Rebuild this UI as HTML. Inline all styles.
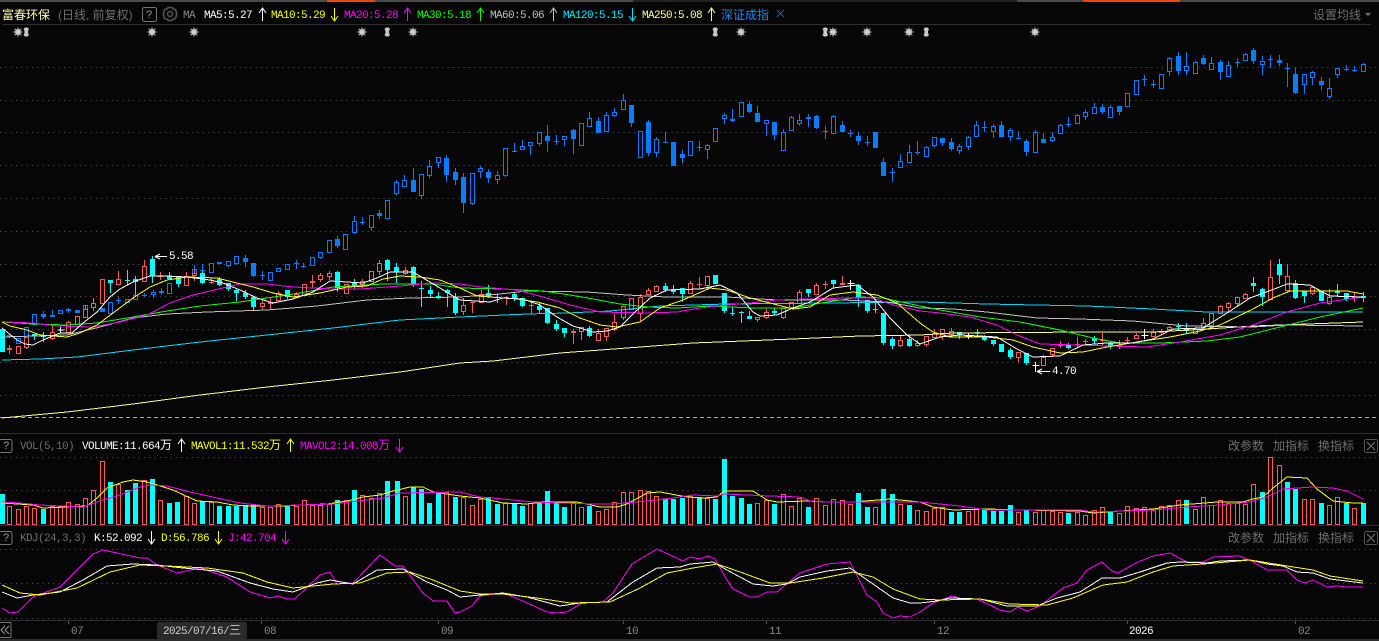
<!DOCTYPE html>
<html lang="zh"><head><meta charset="utf-8"><title>富春环保</title>
<style>
html,body{margin:0;padding:0;background:#060606;overflow:hidden;width:1379px;height:641px}
svg{display:block}
.m{font-family:"Liberation Mono","Noto Sans CJK SC",monospace;font-size:11px;letter-spacing:-.6px}
.c{font-family:"Liberation Sans","Noto Sans CJK SC",sans-serif;font-size:12px}
.w{fill:none;stroke-width:1}
.f{fill:none;stroke-width:5}
.h{fill:#060606;stroke-width:1}
.v{fill:none;stroke-width:1}
polyline{fill:none;stroke-width:1;shape-rendering:crispEdges}
</style></head><body>
<svg xmlns="http://www.w3.org/2000/svg" width="1379" height="641" viewBox="0 0 1379 641">
<defs>
<g id="au" fill="none" stroke="currentColor"><path d="M.5 0V13M-3 5L.5 0L4 5"/></g>
<g id="ad" fill="none" stroke="currentColor"><path d="M.5 0V13M-3 8L.5 13L4 8"/></g>
<g id="s" stroke="#cccccc"><circle r="3" fill="#cccccc" stroke="none"/><path d="M0 -4.5V4.5M-4.5 0H4.5M-3.3 -3.3L3.3 3.3M-3.3 3.3L3.3 -3.3"/></g>
<g id="t" fill="#c8c8c8"><path d="M-1 -4.5H1.500L3 -3L2 -1V1L3 3L1.500 4.500H-1L-2.500 3L-1.500 1V-1L-2.500 -3Z"/></g>
</defs>
<rect width="1379" height="641" fill="#060606"/>
<!-- top strip -->
<rect x="0" y="0" width="633" height="2" fill="#4a4a4a"/><rect x="633" y="0" width="384" height="2" fill="#222"/><rect x="1017" y="0" width="362" height="2" fill="#4a4a4a"/>
<rect x="327" y="0" width="48" height="2" fill="#e8480c"/><rect x="1083" y="0" width="97" height="2" fill="#e8480c"/>
<rect x="2" y="24" width="1369" height="1" fill="#2e2e2e"/>
<rect x="0" y="433" width="1379" height="1" fill="#2e2e2e"/><rect x="0" y="525" width="1379" height="1" fill="#2e2e2e"/><rect x="0" y="620" width="1379" height="1" fill="#2e2e2e"/><rect x="0" y="639" width="1379" height="2" fill="#2e2e2e"/>
<!-- grid -->
<path fill="none" stroke="#5a5a5a" stroke-dasharray="1 4.33" d="M0 67.500H1379M0 100.500H1379M0 132.500H1379M0 165.500H1379M0 198.500H1379M0 231.500H1379M0 264.500H1379M0 296.500H1379M0 329.500H1379M0 362.500H1379M0 395.500H1379M0 457.500H1379M0 490.500H1379M0 549.500H1379M0 583.500H1379M0 618.500H1379"/>
<path fill="none" stroke="#aaa" stroke-dasharray="4 3" d="M0 417.500H1379"/>

<!-- blue overlay candles -->
<g stroke="#0a7cff" transform="translate(.5,0)">
<path class="w" d="M9 335V338M43 311V319M52 310V317M68 308V313M118 297V304M144 293V297M153 290V298M161 288V295M194 265V276M202 264V274M228 261V267M236 256V265M245 255V267M253 263V277M262 271V280M296 260V269M303 263V268M320 252V259M337 236V248M354 216V234M362 217V225M371 215V231M379 210V219M396 180V195M404 175V187M413 168V192M421 174V198M429 160V178M438 157V168M446 155V182M455 168V185M463 173V213M472 173V205M480 166V178M488 169V183M497 171V184M505 148V177M514 143V152M522 140V150M530 142V155M539 132V146M547 125V152M556 135V145M564 136V146M573 129V154M581 123V146M589 112V127M598 117V133M606 112V131M614 108V117M623 94V110M631 105V127M640 131V158M648 120V156M656 137V157M665 132V143M673 142V166M682 150V163M690 141V155M699 141V151M707 144V159M724 113V124M732 109V122M749 101V113M757 106V122M766 120V136M774 122V140M783 129V150M791 116V130M799 114V126M808 114V127M816 115V129M825 126V139M833 115V133M842 121V132M850 130V137M858 132V145M867 136V146M875 132V148M883 158V176M892 168V182M900 154V167M909 145V162M917 141V155M926 146V157M934 137V147M942 138V146M951 138V151M959 144V154M968 136V150M976 121V136M984 121V132M993 124V138M1001 121V137M1010 128V141M1018 131V139M1026 139V156M1035 130V152M1043 133V143M1052 132V142M1060 124V133M1068 117V127M1077 114V124M1085 110V120M1094 103V113M1102 104V114M1110 105V117M1119 106V115M1144 75V86M1153 80V88M1169 57V76M1178 52V75M1186 52V75M1195 61V73M1203 55V65M1211 57V69M1220 60V80M1228 61V76M1237 58V67M1245 53V61M1253 48V64M1262 56V75M1270 55V68M1279 55V66M1287 63V87M1295 68V94M1304 74V94M1312 71V85M1321 77V90M1329 78V99M1337 68V78M1346 65V71M1354 66V72M1363 63V71"/>
<path class="f" d="M9 335V337M43 314V317M52 315V317M68 309V311M77 310V313M102 308V312M118 300V301M144 295V296M161 291V293M202 270V271M219 262V264M245 258V262M253 263V276M262 275V276M296 263V264M303 266V267M337 239V246M362 222V223M379 213V216M413 180V192M446 158V175M455 172V180M463 177V203M488 172V178M514 151V152M547 136V141M556 141V142M573 130V139M598 121V133M631 105V123M648 122V153M665 142V143M673 142V166M682 154V158M699 147V148M732 119V121M749 104V112M757 113V122M774 122V135M808 117V119M816 116V128M825 131V132M842 125V132M850 133V134M858 136V141M867 142V143M875 132V148M883 162V176M892 172V173M917 152V153M942 138V143M951 142V149M984 127V128M1001 125V137M1018 138V139M1026 141V152M1043 139V143M1068 124V125M1102 107V112M1119 106V112M1144 79V80M1153 84V85M1178 56V71M1203 58V64M1220 62V72M1237 62V63M1253 50V61M1270 59V60M1279 60V63M1287 68V69M1295 74V93M1321 81V85M1346 69V70M1354 70V71"/>
</g>
<path class="h" stroke="#0a7cff" transform="translate(.5,.5)" d="M16 338h4V343h-4zM24 327h4V337h-4zM32 314h4V324h-4zM58 310h4V313h-4zM83 305h4V317h-4zM108 302h4V313h-4zM125 299h4V302h-4zM133 295h4V299h-4zM151 292h4V294h-4zM167 283h4V293h-4zM192 269h4V275h-4zM209 263h4V272h-4zM226 261h4V265h-4zM234 256h4V263h-4zM268 272h4V280h-4zM276 268h4V271h-4zM285 264h4V269h-4zM310 257h4V265h-4zM318 252h4V257h-4zM327 240h4V252h-4zM343 234h4V249h-4zM352 221h4V232h-4zM369 215h4V227h-4zM385 200h4V218h-4zM394 182h4V193h-4zM402 180h4V186h-4zM419 174h4V195h-4zM427 166h4V175h-4zM436 157h4V162h-4zM470 173h4V203h-4zM478 168h4V171h-4zM495 175h4V179h-4zM503 148h4V175h-4zM520 146h4V149h-4zM528 142h4V145h-4zM537 132h4V143h-4zM562 136h4V139h-4zM579 123h4V145h-4zM587 118h4V126h-4zM604 115h4V131h-4zM612 112h4V115h-4zM621 100h4V109h-4zM638 131h4V157h-4zM654 139h4V152h-4zM688 141h4V155h-4zM705 145h4V149h-4zM713 128h4V141h-4zM722 115h4V118h-4zM739 102h4V116h-4zM764 120h4V123h-4zM781 132h4V150h-4zM789 117h4V130h-4zM797 120h4V123h-4zM831 116h4V133h-4zM898 161h4V167h-4zM907 152h4V162h-4zM924 147h4V156h-4zM932 137h4V145h-4zM957 146h4V150h-4zM966 137h4V146h-4zM974 125h4V136h-4zM991 126h4V131h-4zM1008 130h4V136h-4zM1033 132h4V152h-4zM1050 137h4V140h-4zM1058 125h4V133h-4zM1075 115h4V123h-4zM1083 112h4V116h-4zM1092 107h4V113h-4zM1108 107h4V117h-4zM1125 93h4V106h-4zM1134 80h4V94h-4zM1159 74h4V88h-4zM1167 58h4V71h-4zM1184 66h4V70h-4zM1193 62h4V73h-4zM1209 63h4V69h-4zM1226 65h4V76h-4zM1243 54h4V60h-4zM1260 61h4V64h-4zM1302 74h4V84h-4zM1310 72h4V77h-4zM1327 88h4V96h-4zM1335 68h4V74h-4zM1361 64h4V71h-4z"/>

<!-- main candles -->
<g transform="translate(.5,0)">
<g stroke="#00ffff">
<path class="w" d="M34 334V340M43 332V342M110 280V293M127 270V285M135 276V295M152 256V283M169 272V280M178 277V287M202 271V284M219 277V286M228 283V291M236 288V301M245 290V299M253 297V310M287 290V299M337 271V292M354 279V289M387 259V281M396 263V283M413 266V287M421 281V307M430 286V297M438 292V299M447 289V307M455 293V315M488 285V298M497 294V303M514 293V301M522 298V307M539 303V313M547 308V324M556 320V331M564 328V337M589 326V337M665 283V292M673 285V294M682 288V302M724 293V313M732 307V316M741 311V323M749 311V319M774 308V315M808 289V297M833 280V288M858 284V307M867 300V313M875 303V313M883 313V345M892 337V349M909 335V347M959 332V339M977 329V336M984 335V341M993 340V346M1010 348V359M1026 353V365M1068 343V349M1094 336V344M1110 341V349M1178 323V330M1186 323V333M1253 277V292M1262 288V306M1279 259V284M1295 280V299M1304 291V303M1337 284V297M1346 293V301M1363 292V302"/>
<path class="f" d="M2 329V352M34 334V336M43 336V337M110 280V283M127 280V281M135 279V282M152 259V276M169 276V279M178 277V284M202 273V283M219 279V285M228 283V289M236 290V293M245 293V297M253 297V307M287 290V297M337 272V288M354 282V287M387 260V270M396 267V272M413 267V285M421 288V289M430 290V294M438 296V297M447 290V293M455 297V313M488 293V297M497 297V298M514 294V299M522 298V306M539 306V310M547 308V323M556 324V329M564 328V333M589 328V336M665 286V290M673 289V292M682 288V294M715 275V284M724 293V311M732 313V314M741 312V313M749 316V319M774 311V313M808 289V293M833 280V284M858 285V297M867 300V311M875 309V310M883 313V343M892 339V346M909 339V346M959 332V335M977 332V333M984 336V340M993 340V344M1001 344V352M1010 350V357M1026 353V363M1068 345V348M1094 338V341M1110 343V346M1178 326V327M1186 328V331M1253 283V286M1262 289V297M1279 264V275M1295 283V298M1304 291V296M1321 291V301M1337 291V293M1346 293V299M1363 296V298"/>
</g>
<g stroke="#fc5c57">
<path class="w" d="M9 345V354M26 337V349M52 326V340M68 321V332M85 305V317M93 298V311M118 271V285M144 260V281M160 272V280M186 272V285M194 270V281M211 278V284M262 299V309M270 298V309M278 291V300M296 292V297M312 275V288M320 273V282M329 271V280M362 279V288M379 260V275M405 267V275M463 298V315M472 302V313M481 290V302M506 296V305M531 302V314M573 329V344M581 327V340M598 329V340M606 328V341M614 314V331M623 306V320M640 294V322M648 288V294M656 285V291M690 281V293M699 277V289M707 276V290M757 317V322M766 309V319M783 308V319M791 302V308M799 290V303M816 283V294M825 281V289M842 276V285M900 335V347M917 340V347M926 336V347M934 329V337M942 329V340M951 328V336M1018 352V362M1043 355V365M1052 348V357M1060 341V348M1077 337V347M1085 339V345M1102 333V345M1119 340V349M1127 337V343M1136 333V339M1153 329V337M1161 329V335M1169 326V331M1195 327V334M1203 318V328M1220 305V313M1228 302V312M1237 297V307M1245 293V298M1270 260V299M1287 264V293M1312 286V295M1329 289V305M1354 293V302"/>
<path class="f" d="M9 348V350M160 276V277M211 282V283M270 302V304M312 281V283M472 302V303M506 297V298M531 305V306M573 331V333M699 284V285M825 284V285M842 283V285M1060 345V346M1077 344V345M1085 341V342M1102 340V341M1119 345V346M1127 340V341M1161 332V333M1354 297V298"/>
</g>
<path stroke="#fff" class="w" d="M60 327V333M57 330H64M850 280V290M847 283.500H854M968 333V339M965 336.500H972M1035 362V372M1032 365.500H1039M1144 329V339M1141 335.500H1148"/>
</g>
<path class="h" stroke="#fc5c57" transform="translate(.5,.5)" d="M16 346h4V353h-4zM24 337h4V347h-4zM50 332h4V338h-4zM66 322h4V332h-4zM75 316h4V324h-4zM83 309h4V317h-4zM91 303h4V307h-4zM100 279h4V303h-4zM116 279h4V284h-4zM142 266h4V281h-4zM184 276h4V285h-4zM192 273h4V275h-4zM260 303h4V306h-4zM276 293h4V300h-4zM294 294h4V297h-4zM302 284h4V295h-4zM318 275h4V279h-4zM327 273h4V276h-4zM344 284h4V293h-4zM360 281h4V284h-4zM369 271h4V281h-4zM377 263h4V271h-4zM403 270h4V273h-4zM461 305h4V311h-4zM479 294h4V302h-4zM579 327h4V331h-4zM596 333h4V340h-4zM604 328h4V336h-4zM612 322h4V329h-4zM621 306h4V317h-4zM629 298h4V309h-4zM638 297h4V313h-4zM646 290h4V294h-4zM654 286h4V291h-4zM688 283h4V293h-4zM705 276h4V285h-4zM755 317h4V319h-4zM764 312h4V317h-4zM781 308h4V317h-4zM789 302h4V307h-4zM797 292h4V303h-4zM814 285h4V294h-4zM898 340h4V345h-4zM915 343h4V345h-4zM924 336h4V344h-4zM932 333h4V337h-4zM940 329h4V336h-4zM949 331h4V334h-4zM1016 352h4V357h-4zM1041 357h4V365h-4zM1050 348h4V354h-4zM1134 335h4V338h-4zM1151 332h4V336h-4zM1167 327h4V329h-4zM1193 329h4V333h-4zM1201 323h4V327h-4zM1209 313h4V325h-4zM1218 306h4V313h-4zM1226 303h4V307h-4zM1235 297h4V303h-4zM1243 294h4V298h-4zM1268 277h4V299h-4zM1285 276h4V290h-4zM1310 287h4V293h-4zM1327 297h4V303h-4z"/>

<!-- MA lines -->
<polyline stroke="#00d8f8" points="2,360 40,359 77,357 133,350 200,342 267,335 333,328 400,320 460,317 527,314 567,313 610,311 660,306 727,304 827,303 920,302 987,304 1087,306 1153,309 1207,312 1287,312 1363,312"/>
<polyline stroke="#ffff99" points="2,418 67,412 133,404 200,395 267,387 333,380 400,372 460,363 493,361 560,353 627,348 693,343 793,339 860,336 920,335 953,333 1087,332 1153,332 1207,329 1253,326 1363,322"/>
<polyline stroke="#c0c0c0" points="2,337 67,335 100,327 133,318 167,314 207,312 267,310 317,306 367,300 410,298 460,297 500,294 527,291 587,292 627,295 667,297 727,297 777,300 843,300 887,302 920,308 953,309 987,312 1037,318 1080,319 1133,321 1187,326 1253,327 1287,325 1363,326"/>
<polyline stroke="#00ff00" points="2,322 33,324 67,325 97,323 133,317 167,311 200,306 240,302 267,298 300,293 333,287 383,284 433,284 460,288 503,289 543,291 570,295 593,299 620,304 647,307 677,308 710,306 753,308 793,308 827,302 860,297 883,298 920,306 940,310 980,317 1020,322 1060,330 1093,338 1120,343 1160,343 1207,341 1240,337 1280,327 1320,317 1363,308"/>
<polyline stroke="#ff00ff" points="5,322 33,323 57,326 93,327 120,322 147,315 170,303 193,295 227,287 240,284 267,284 293,287 333,289 360,289 400,286 433,283 460,284 480,287 517,290 543,297 570,305 600,312 647,313 677,312 700,308 727,305 750,303 777,300 807,299 847,298 873,298 893,305 920,311 940,313 970,317 997,325 1017,335 1040,344 1080,345 1107,346 1147,347 1180,342 1220,335 1253,325 1287,312 1320,303 1363,297"/>
<polyline stroke="#ffff00" points="2,322 10,326 27,330 40,335 67,337 80,333 97,325 113,313 133,298 150,287 167,280 187,277 217,278 233,282 253,287 273,293 293,297 320,293 347,287 367,286 383,279 400,276 420,277 440,280 460,288 477,296 517,299 537,302 560,308 580,318 600,325 617,327 640,322 660,308 683,300 710,288 727,290 750,298 770,303 793,309 810,307 830,295 853,292 877,295 897,303 920,323 933,332 950,337 987,337 1013,340 1033,347 1060,353 1083,352 1107,347 1137,342 1170,337 1200,331 1220,325 1253,309 1273,298 1290,291 1347,291 1363,294"/>
<polyline stroke="#ffffff" points="2,328 17,340 25,344 33,345 43,340 60,333 72,333 83,323 97,312 110,297 120,289 133,282 150,276 167,276 187,277 210,280 223,283 240,290 257,298 273,303 293,299 313,292 330,281 347,282 363,283 377,278 390,272 413,272 423,278 440,288 453,296 460,300 490,302 503,298 523,299 540,305 557,317 573,326 593,332 607,331 620,327 633,314 650,298 667,290 700,289 720,285 737,293 753,312 760,316 777,315 793,308 810,302 833,288 857,285 873,297 890,318 907,335 920,344 940,337 960,335 997,337 1017,349 1033,357 1060,356 1083,345 1107,343 1133,343 1153,339 1173,329 1203,328 1227,313 1250,298 1277,288 1287,284 1310,285 1330,296 1363,297"/>

<!-- extreme labels -->
<path fill="none" stroke="#fff" d="M155 256.500H167M155 256.500L160 254M155 256.500L160 259M1037 371.500H1050M1037 371.500L1042 369M1037 371.500L1042 374"/>
<text class="m" x="169" y="259" fill="#fff">5.58</text>
<text class="m" x="1052" y="374" fill="#fff">4.70</text>

<!-- markers -->
<use href="#s" x="18" y="32"/><use href="#t" x="26" y="32"/><use href="#s" x="152" y="32"/><use href="#s" x="194" y="32"/><use href="#s" x="362" y="32"/><use href="#t" x="387" y="32"/><use href="#s" x="413" y="32"/><use href="#t" x="715" y="32"/><use href="#s" x="741" y="32"/><use href="#t" x="825" y="32"/><use href="#s" x="833" y="32"/><use href="#s" x="867" y="32"/><use href="#s" x="909" y="32"/><use href="#t" x="926" y="32"/><use href="#s" x="1035" y="32"/>

<!-- header -->
<text class="c" x="2" y="19" fill="#ffffb0">富春环保</text>
<text class="c" x="58" y="19" fill="#6e6e6e">(日线, 前复权)</text>
<rect x="142.500" y="7.500" width="14" height="14" rx="2" fill="none" stroke="#777"/>
<text class="m" x="146" y="18" fill="#999">?</text>
<path fill="none" stroke="#555" stroke-width="1.500" d="M168 7.500H172L173 9L175.500 9.500L176.500 13V15L175.500 18.500L173 19L172 20.500H168L167 19L164.500 18.500L163.500 15V13L164.500 9.500L167 9Z"/><circle cx="170" cy="14" r="2.500" fill="none" stroke="#555" stroke-width="1.500"/>
<text class="m" x="183" y="18" fill="#888">MA</text>
<text class="m" x="204" y="18" fill="#fff">MA5:5.27</text><use href="#au" x="262" y="8" color="#fff"/>
<text class="m" x="271" y="18" fill="#ffff00">MA10:5.29</text><use href="#ad" x="334" y="8" color="#ffff00"/>
<text class="m" x="344" y="18" fill="#ff00ff">MA20:5.28</text><use href="#au" x="407" y="8" color="#ff00ff"/>
<text class="m" x="417" y="18" fill="#00ff00">MA30:5.18</text><use href="#au" x="480" y="8" color="#00ff00"/>
<text class="m" x="490" y="18" fill="#c0c0c0">MA60:5.06</text><use href="#au" x="553" y="8" color="#c0c0c0"/>
<text class="m" x="563" y="18" fill="#00e5ff">MA120:5.15</text><use href="#ad" x="632" y="8" color="#00e5ff"/>
<text class="m" x="642" y="18" fill="#ffff99">MA250:5.08</text><use href="#au" x="711" y="8" color="#ffff99"/>
<text class="c" x="721" y="19" fill="#1a86f0">深证成指</text>
<path fill="none" stroke="#1a66b0" d="M777 10L784 17M784 10L777 17"/>
<text class="c" x="1313" y="19" fill="#6e6e6e">设置均线</text>
<path fill="#777" d="M1365 13H1371L1368 16Z"/>

<!-- volume bars -->
<path class="f" stroke="#00ffff" transform="translate(.5,0)" d="M2 494V524M43 509V524M110 482V524M127 490V524M135 483V524M152 479V524M169 503V524M177 502V524M202 501V524M219 506V524M228 506V524M236 506V524M245 505V524M253 504V524M287 506V524M337 500V524M354 490V524M387 481V524M397 481V524M413 487V524M421 489V524M429 503V524M438 493V524M455 497V524M488 497V524M497 504V524M514 504V524M522 506V524M539 503V524M547 491V524M556 502V524M564 507V524M589 506V524M665 499V524M673 499V524M682 498V524M699 497V524M715 499V524M724 459V524M732 496V524M741 498V524M749 504V524M774 504V524M808 507V524M858 493V524M867 507V524M883 489V524M892 494V524M909 505V524M951 512V524M959 512V524M984 510V524M993 511V524M1001 511V524M1010 505V524M1026 510V524M1068 513V524M1110 512V524M1186 500V524M1262 492V524M1287 482V524M1295 489V524M1321 503V524M1346 503V524M1363 503V524"/>
<path class="v" stroke="#fc5c57" transform="translate(.5,.5)" d="M7 506h4V524h-4zM16 509h4V524h-4zM24 506h4V524h-4zM32 508h4V524h-4zM50 506h4V524h-4zM58 507h4V524h-4zM66 502h4V524h-4zM75 504h4V524h-4zM83 498h4V524h-4zM91 490h4V524h-4zM100 461h4V524h-4zM116 484h4V524h-4zM142 480h4V524h-4zM158 500h4V524h-4zM184 496h4V524h-4zM192 503h4V524h-4zM209 502h4V524h-4zM260 507h4V524h-4zM268 507h4V524h-4zM276 504h4V524h-4zM294 506h4V524h-4zM302 500h4V524h-4zM310 505h4V524h-4zM318 505h4V524h-4zM327 504h4V524h-4zM344 500h4V524h-4zM360 495h4V524h-4zM369 498h4V524h-4zM377 493h4V524h-4zM403 496h4V524h-4zM444 492h4V524h-4zM461 497h4V524h-4zM470 505h4V524h-4zM478 499h4V524h-4zM503 503h4V524h-4zM528 503h4V524h-4zM571 502h4V524h-4zM579 507h4V524h-4zM596 511h4V524h-4zM604 509h4V524h-4zM612 502h4V524h-4zM621 492h4V524h-4zM629 492h4V524h-4zM638 490h4V524h-4zM646 491h4V524h-4zM654 496h4V524h-4zM688 496h4V524h-4zM705 498h4V524h-4zM755 503h4V524h-4zM764 500h4V524h-4zM781 494h4V524h-4zM789 506h4V524h-4zM797 498h4V524h-4zM814 498h4V524h-4zM823 505h4V524h-4zM831 499h4V524h-4zM840 500h4V524h-4zM848 504h4V524h-4zM873 507h4V524h-4zM898 504h4V524h-4zM915 510h4V524h-4zM924 511h4V524h-4zM932 508h4V524h-4zM940 507h4V524h-4zM966 511h4V524h-4zM974 508h4V524h-4zM1016 512h4V524h-4zM1033 512h4V524h-4zM1041 510h4V524h-4zM1050 511h4V524h-4zM1058 512h4V524h-4zM1075 512h4V524h-4zM1083 515h4V524h-4zM1092 510h4V524h-4zM1100 507h4V524h-4zM1117 513h4V524h-4zM1125 506h4V524h-4zM1134 508h4V524h-4zM1142 507h4V524h-4zM1151 510h4V524h-4zM1159 506h4V524h-4zM1167 505h4V524h-4zM1176 500h4V524h-4zM1193 509h4V524h-4zM1201 497h4V524h-4zM1209 505h4V524h-4zM1218 500h4V524h-4zM1226 503h4V524h-4zM1235 503h4V524h-4zM1243 504h4V524h-4zM1251 484h4V524h-4zM1268 457h4V524h-4zM1277 465h4V524h-4zM1302 499h4V524h-4zM1310 499h4V524h-4zM1327 505h4V524h-4zM1335 497h4V524h-4zM1352 508h4V524h-4z"/>
<polyline stroke="#ffff00" points="2,503 33,505 43,508 63,507 87,506 97,498 107,488 123,482 133,480 147,482 157,485 173,490 197,501 217,502 233,505 250,506 283,506 300,505 327,504 347,501 363,497 380,495 393,491 410,487 423,487 433,492 460,496 480,498 503,503 527,504 543,502 577,502 600,507 617,507 627,504 647,493 660,492 687,497 703,498 717,497 724,491 753,491 767,500 777,502 807,501 827,502 853,502 890,499 920,502 933,507 953,510 987,509 1020,510 1080,511 1093,513 1120,511 1153,509 1180,505 1217,502 1243,502 1253,499 1263,497 1273,488 1287,477 1307,478 1317,489 1333,501 1353,503 1363,503"/>
<polyline stroke="#ff00ff" points="2,502 20,503 40,505 83,507 100,501 117,496 140,487 150,485 167,486 190,492 217,498 240,503 267,506 333,504 383,498 400,493 460,492 480,497 503,499 533,502 593,504 613,504 647,501 673,498 693,495 717,496 724,494 770,496 800,497 810,501 827,502 880,502 920,502 940,504 960,506 987,510 1080,510 1093,512 1153,510 1187,507 1220,505 1250,502 1267,497 1283,489 1313,487 1333,488 1347,491 1363,499"/>

<!-- volume header -->
<rect x="-1" y="439.500" width="13" height="13" rx="2" fill="none" stroke="#777"/><text class="m" x="3" y="449" fill="#999">?</text>
<text class="m" x="20" y="449" fill="#6e6e6e">VOL(5,10)</text>
<text class="m" x="82" y="449" fill="#fff">VOLUME:11.664<tspan class="c">万</tspan></text><use href="#au" x="181" y="439" color="#fff"/>
<text class="m" x="191" y="449" fill="#ffff00">MAVOL1:11.532<tspan class="c">万</tspan></text><use href="#au" x="290" y="439" color="#ffff00"/>
<text class="m" x="300" y="449" fill="#ff00ff">MAVOL2:14.008<tspan class="c">万</tspan></text><use href="#ad" x="399" y="439" color="#ff00ff"/>
<text class="c" x="1228" y="450" fill="#6e6e6e">改参数</text><text class="c" x="1273" y="450" fill="#6e6e6e">加指标</text><text class="c" x="1318" y="450" fill="#6e6e6e">换指标</text>
<rect x="1364.500" y="439.500" width="13" height="13" rx="2" fill="none" stroke="#555"/><path fill="none" stroke="#777" d="M1367 442L1375 450M1375 442L1367 450"/>

<!-- KDJ header -->
<rect x="-1" y="531.500" width="13" height="13" rx="2" fill="none" stroke="#777"/><text class="m" x="3" y="541" fill="#999">?</text>
<text class="m" x="20" y="541" fill="#6e6e6e">KDJ(24,3,3)</text>
<text class="m" x="94" y="541" fill="#fff">K:52.092</text><use href="#ad" x="151" y="531" color="#fff"/>
<text class="m" x="161" y="541" fill="#ffff00">D:56.786</text><use href="#ad" x="218" y="531" color="#ffff00"/>
<text class="m" x="228" y="541" fill="#ff00ff">J:42.704</text><use href="#ad" x="285" y="531" color="#ff00ff"/>
<text class="c" x="1228" y="542" fill="#6e6e6e">改参数</text><text class="c" x="1273" y="542" fill="#6e6e6e">加指标</text><text class="c" x="1318" y="542" fill="#6e6e6e">换指标</text>
<rect x="1364.500" y="531.500" width="13" height="13" rx="2" fill="none" stroke="#555"/><path fill="none" stroke="#777" d="M1367 534L1375 542M1375 534L1367 542"/>

<!-- KDJ lines -->
<polyline stroke="#ff00ff" points="2,608 10,613 18,612 33,597 60,587 93,554 103,550 140,558 147,558 157,565 177,573 200,568 227,577 250,592 270,598 278,596 287,599 295,599 320,575 330,572 337,584 353,583 380,555 395,566 403,566 423,593 433,601 447,601 455,613 460,612 472,606 480,596 503,593 523,601 547,612 557,613 567,612 582,603 603,602 613,593 632,564 657,549 683,561 690,557 700,559 708,556 715,559 727,580 733,589 750,597 757,597 767,592 777,592 800,573 827,564 850,562 867,595 877,602 883,613 893,618 900,616 910,617 920,612 933,603 952,596 963,599 977,599 1000,610 1010,612 1018,607 1027,611 1040,606 1063,588 1077,583 1087,570 1102,562 1112,571 1118,573 1138,562 1153,556 1170,553 1187,562 1203,562 1213,557 1240,556 1253,562 1267,570 1287,570 1297,580 1305,583 1313,580 1327,587 1337,586 1347,587 1363,587"/>
<polyline stroke="#ffffff" points="2,592 17,598 33,595 60,592 83,580 107,566 133,564 157,565 183,568 217,571 250,583 273,589 293,592 317,583 330,580 353,584 377,570 403,569 427,582 447,590 460,597 480,595 503,593 527,597 560,606 580,603 607,602 633,582 657,568 680,567 690,564 713,562 727,570 753,584 773,586 787,584 800,577 827,571 850,568 873,584 893,598 910,603 920,603 937,601 950,598 980,599 1007,606 1037,606 1057,598 1080,592 1102,578 1120,578 1140,572 1167,563 1180,562 1207,563 1220,561 1250,560 1267,564 1283,566 1297,572 1313,573 1330,579 1363,583"/>
<polyline stroke="#ffff00" points="2,585 20,593 40,595 77,588 110,572 140,565 167,566 207,568 243,573 267,582 293,588 333,584 360,583 387,573 410,572 433,580 460,591 480,594 503,594 537,598 570,603 610,602 640,588 667,573 693,568 717,564 743,573 770,583 790,583 823,578 853,572 873,577 893,589 920,599 940,600 980,599 1010,604 1047,605 1073,598 1103,585 1127,582 1153,572 1173,566 1203,564 1250,560 1287,566 1313,570 1330,576 1363,581"/>

<!-- axis -->
<rect x="-1" y="622.500" width="12" height="15" rx="1" fill="none" stroke="#777"/><path fill="none" stroke="#999" d="M5 626L1 630L5 634M9 626L5 630L9 634"/>
<path fill="none" stroke="#555" d="M68.500 621V624M261.500 621V624M438.500 621V624M623.500 621V624M766.500 621V624M934.500 621V624M1127.500 621V624M1295.500 621V624"/>
<text class="m" x="71" y="634" fill="#888">07</text>
<rect x="157" y="622" width="90" height="17" rx="2" fill="#2a2a2a"/>
<text class="m" x="163" y="634" fill="#cfcfcf">2025/07/16/<tspan class="c">三</tspan></text>
<text class="m" x="264" y="634" fill="#888">08</text>
<text class="m" x="441" y="634" fill="#888">09</text>
<text class="m" x="626" y="634" fill="#888">10</text>
<text class="m" x="769" y="634" fill="#888">11</text>
<text class="m" x="937" y="634" fill="#888">12</text>
<text class="m" x="1129" y="634" fill="#fff">2026</text>
<text class="m" x="1298" y="634" fill="#888">02</text>
</svg>
</body></html>
